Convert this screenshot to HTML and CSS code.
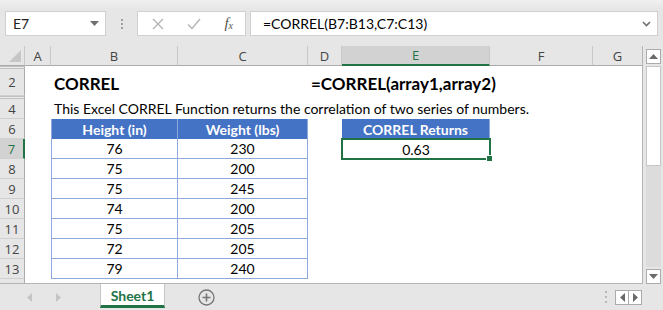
FILE: index.html
```html
<!DOCTYPE html>
<html lang="en">
<head>
    <meta charset="UTF-8">
    <meta name="viewport" content="width=device-width, initial-scale=1.0">
    <title>CORREL - Excel</title>
    <link rel="stylesheet" href="styles.css">
</head>
<body>
    <div class="excel">
        <div class="formula-row">
            <div class="namebox">
                <span>E7</span>
                <svg class="caret" width="9" height="5" viewBox="0 0 9 5"><path d="M0 0h9L4.5 5z" fill="#707070"/></svg>
            </div>
            <div class="grip"><i></i><i></i><i></i></div>
            <div class="fx-buttons">
                <svg width="12" height="12" viewBox="0 0 12 12"><path d="M1 1l10 10M11 1L1 11" stroke="#b4b4b4" stroke-width="1.4"/></svg>
                <svg width="14" height="12" viewBox="0 0 14 12"><path d="M1 6.5l4 4L13 1" stroke="#b4b4b4" stroke-width="1.4" fill="none"/></svg>
                <span class="fx">f<sub>x</sub></span>
            </div>
            <div class="formula-input">
                <span>=CORREL(B7:B13,C7:C13)</span>
                <svg class="chev" width="9" height="6" viewBox="0 0 9 6"><path d="M1 1l3.5 3.5L8 1" stroke="#707070" stroke-width="1.6" fill="none"/></svg>
            </div>
        </div>

        <div class="sheet-area">
            <div class="grid">
                <div class="corner"></div>
                <div class="colhead c2">A</div>
                <div class="colhead c3">B</div>
                <div class="colhead c4">C</div>
                <div class="colhead c5">D</div>
                <div class="colhead c6 sel">E</div>
                <div class="colhead c7">F</div>
                <div class="colhead c8">G</div>

                <div class="rowhead hidden r2"></div>
                <div class="rowhead r3">2</div>
                <div class="rowhead hidden r4"></div>
                <div class="rowhead r5">4</div>
                <div class="rowhead r6">6</div>
                <div class="rowhead r7 sel">7</div>
                <div class="rowhead r8">8</div>
                <div class="rowhead r9">9</div>
                <div class="rowhead r10">10</div>
                <div class="rowhead r11">11</div>
                <div class="rowhead r12">12</div>
                <div class="rowhead r13">13</div>
                <div class="rowhead r14"></div>

                <div class="cell title c3 r3">CORREL</div>
                <div class="cell title wide c5 r3">=CORREL(array1,array2)</div>
                <div class="cell text wide c3 r5">This Excel CORREL Function returns the correlation of two series of numbers.</div>

                <div class="cell th c3 r6">Height (in)</div>
                <div class="cell th c4 r6">Weight (lbs)</div>
                <div class="cell td c3 r7">76</div><div class="cell td c4 r7">230</div>
                <div class="cell td c3 r8">75</div><div class="cell td c4 r8">200</div>
                <div class="cell td c3 r9">75</div><div class="cell td c4 r9">245</div>
                <div class="cell td c3 r10">74</div><div class="cell td c4 r10">200</div>
                <div class="cell td c3 r11">75</div><div class="cell td c4 r11">205</div>
                <div class="cell td c3 r12">72</div><div class="cell td c4 r12">205</div>
                <div class="cell td c3 r13">79</div><div class="cell td c4 r13">240</div>

                <div class="cell th c6 r6">CORREL Returns</div>
                <div class="cell active c6 r7">0.63<span class="handle"></span></div>
            </div>

            <div class="vscroll">
                <div class="sbtn"><svg width="9" height="5" viewBox="0 0 9 5"><path d="M0 5h9L4.5 0z" fill="#6a6a6a"/></svg></div>
                <div class="thumb"></div>
                <div class="track"></div>
                <div class="sbtn"><svg width="9" height="5" viewBox="0 0 9 5"><path d="M0 0h9L4.5 5z" fill="#6a6a6a"/></svg></div>
            </div>
        </div>

        <div class="tabbar">
            <div class="tabnav">
                <svg width="5" height="9" viewBox="0 0 5 9"><path d="M5 0v9L0 4.5z" fill="#c4c4c4"/></svg>
                <svg width="5" height="9" viewBox="0 0 5 9"><path d="M0 0v9l5-4.5z" fill="#c4c4c4"/></svg>
            </div>
            <div class="tab">Sheet1</div>
            <div class="addsheet">
                <svg width="17" height="17" viewBox="0 0 17 17"><circle cx="8.5" cy="8.5" r="7.5" stroke="#767676" stroke-width="1.3" fill="none"/><path d="M8.5 4.5v8M4.5 8.5h8" stroke="#767676" stroke-width="1.6"/></svg>
            </div>
            <div class="tabfill">
                <div class="grip small"><i></i><i></i><i></i></div>
                <div class="hnav">
                    <span><svg width="5" height="9" viewBox="0 0 5 9"><path d="M5 0v9L0 4.5z" fill="#6a6a6a"/></svg></span>
                    <span><svg width="5" height="9" viewBox="0 0 5 9"><path d="M0 0v9l5-4.5z" fill="#6a6a6a"/></svg></span>
                </div>
            </div>
        </div>
    </div>
</body>
</html>
```

FILE: styles.css
```css
body {
    margin: 0;
    padding: 0;
    overflow: hidden;
}
.excel {
    width: 663px;
    height: 310px;
    display: flex;
    flex-direction: column;
    background: #e6e6e6;
    font-family: Lato, "Liberation Sans", sans-serif;
    color: #000;
}

/* formula bar */
.formula-row {
    height: 46px;
    box-sizing: border-box;
    padding: 11px 0 10px 5px;
    display: flex;
    align-items: stretch;
    background: linear-gradient(#f0f0f0, #e6e6e6 9px);
}
.namebox {
    width: 101px;
    box-sizing: border-box;
    background: #fff;
    border: 1px solid #d0d0d0;
    display: flex;
    align-items: center;
    justify-content: space-between;
    padding: 0 6px 0 7px;
    font-size: 14px;
    color: #222;
}
.grip {
    width: 31px;
    display: flex;
    flex-direction: column;
    align-items: center;
    justify-content: center;
    gap: 2px;
}
.grip i {
    width: 2px;
    height: 2px;
    background: #a0a0a0;
}
.fx-buttons {
    width: 109px;
    box-sizing: border-box;
    background: #fff;
    border: 1px solid #d0d0d0;
    display: flex;
    align-items: center;
    justify-content: space-between;
    padding: 0 12px 0 14px;
}
.fx {
    font-family: "Liberation Serif", serif;
    font-style: italic;
    font-size: 15px;
    color: #555;
}
.fx sub {
    font-size: 10px;
    vertical-align: -1px;
}
.formula-input {
    flex: 1;
    margin-left: 4px;
    margin-right: 5px;
    background: #fff;
    border: 1px solid #d0d0d0;
    display: flex;
    align-items: center;
    justify-content: space-between;
    padding: 0 6px 0 12px;
    font-size: 14px;
}

/* sheet */
.sheet-area {
    height: 238px;
    display: flex;
}
.grid {
    width: 643px;
    background: #fff;
    display: grid;
    grid-template-columns: 25px 26px 127px 130px 34px 148px 103px 50px;
    grid-template-rows: 20px 3px 27px 3px 20px repeat(8, 20px) 5px;
    border-right: 1px solid #b4b4b4;
    border-bottom: 1px solid #b4b4b4;
    box-sizing: border-box;
    overflow: hidden;
}
.c2 { grid-column: 2; }
.c3 { grid-column: 3; }
.c4 { grid-column: 4; }
.c5 { grid-column: 5; }
.c6 { grid-column: 6; }
.c7 { grid-column: 7; }
.c8 { grid-column: 8; }
.r2 { grid-row: 2; }
.r3 { grid-row: 3; }
.r4 { grid-row: 4; }
.r5 { grid-row: 5; }
.r6 { grid-row: 6; }
.r7 { grid-row: 7; }
.r8 { grid-row: 8; }
.r9 { grid-row: 9; }
.r10 { grid-row: 10; }
.r11 { grid-row: 11; }
.r12 { grid-row: 12; }
.r13 { grid-row: 13; }
.r14 { grid-row: 14; }

.corner {
    grid-column: 1 / span 2;
    grid-column: 1;
    grid-row: 1;
    background: #e6e6e6;
    border-right: 1px solid #c8c8c8;
    border-bottom: 1px solid #ababab;
    position: relative;
}
.corner::after {
    content: "";
    position: absolute;
    right: 3px;
    bottom: 3px;
    border-style: solid;
    border-width: 0 0 12px 12px;
    border-color: transparent transparent #c6c6c6 transparent;
}
.colhead, .rowhead {
    background: #e6e6e6;
    font-family: "Open Sans", sans-serif;
    font-size: 13px;
    color: #444;
    display: flex;
    align-items: center;
    justify-content: center;
    box-sizing: border-box;
}
.colhead {
    grid-row: 1;
    border-right: 1px solid #c8c8c8;
    border-bottom: 1px solid #ababab;
}
.colhead.sel {
    background: #d2d2d2;
    color: #217346;
    border-bottom: 2px solid #217346;
}
.rowhead {
    grid-column: 1;
    border-right: 1px solid #ababab;
    border-bottom: 1px solid #d0d0d0;
}
.rowhead.hidden {
    border-bottom: 1px solid #c0c0c0;
    border-top: 1px solid #c0c0c0;
    background: #ececec;
}
.rowhead.sel {
    background: #d2d2d2;
    color: #217346;
    border-right: 2px solid #217346;
}

.cell {
    display: flex;
    align-items: flex-end;
    box-sizing: border-box;
    font-size: 14px;
    white-space: nowrap;
    min-width: 0;
}
.wide {
    grid-column-end: span 4;
}
.title {
    font-weight: bold;
    font-size: 17px;
    padding: 0 0 2px 3px;
}
.text {
    padding: 0 0 2px 3px;
}
.th, .td, .active {
    justify-content: center;
    align-items: center;
}
.th {
    background: #4472c4;
    color: #fff;
    font-weight: bold;
    border-right: 1px solid #8ea9db;
}
.td {
    border-right: 1px solid #8ea9db;
    border-bottom: 1px solid #8ea9db;
}
.th.c3, .td.c3 {
    border-left: 1px solid #8ea9db;
}
.active {
    border: 2px solid #217346;
    margin: -1px -1px -1px -1px;
    position: relative;
}
.handle {
    position: absolute;
    right: -4px;
    bottom: -4px;
    width: 5px;
    height: 5px;
    background: #217346;
    border: 1px solid #fff;
}

/* vertical scroll */
.vscroll {
    width: 20px;
    display: flex;
    flex-direction: column;
    align-items: center;
    padding-top: 3px;
    gap: 2px;
    box-sizing: border-box;
}
.sbtn {
    width: 15px;
    height: 15px;
    box-sizing: border-box;
    background: #fff;
    border: 1px solid #ababab;
    display: flex;
    align-items: center;
    justify-content: center;
    flex-shrink: 0;
}
.thumb {
    width: 15px;
    height: 100px;
    box-sizing: border-box;
    background: #fff;
    border: 1px solid #c6c6c6;
    flex-shrink: 0;
}
.track {
    flex: 1;
    width: 15px;
    background: #dcdcdc;
    margin-top: -2px;
}

/* sheet tabs */
.tabbar {
    height: 26px;
    display: flex;
    align-items: stretch;
}
.tabnav {
    width: 100px;
    display: flex;
    align-items: center;
    padding-left: 27px;
    gap: 24px;
    box-sizing: border-box;
}
.tab {
    width: 65px;
    box-sizing: border-box;
    background: #fff;
    border-left: 1px solid #c6c6c6;
    border-right: 1px solid #c6c6c6;
    border-bottom: 3px solid #217346;
    margin-bottom: 2px;
    color: #217346;
    font-weight: bold;
    font-size: 14px;
    display: flex;
    align-items: center;
    justify-content: center;
    padding-top: 2px;
}
.addsheet {
    width: 82px;
    display: flex;
    align-items: center;
    justify-content: center;
}
.tabfill {
    flex: 1;
    display: flex;
    align-items: center;
    justify-content: flex-end;
    padding-right: 21px;
    gap: 8px;
}
.grip.small {
    width: auto;
    gap: 3px;
}
.grip.small i {
    background: #b8b8b8;
}
.hnav {
    display: flex;
    border: 1px solid #ababab;
    height: 13px;
    background: #fff;
}
.hnav span {
    width: 12px;
    display: flex;
    align-items: center;
    justify-content: center;
}
.hnav span + span {
    border-left: 1px solid #ababab;
}
```
